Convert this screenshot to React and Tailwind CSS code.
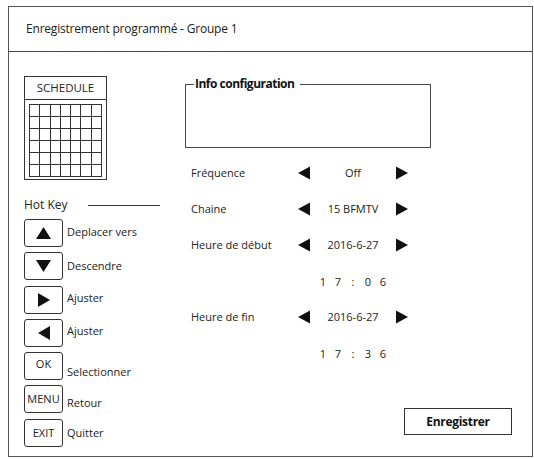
import React from "react";

const font = { fontFamily: '"Open Sans", "Noto Sans", sans-serif' };

function Tri({ dir, w = 12, h = 13 }) {
  let pts;
  if (dir === "left") pts = `${w},0 ${w},${h} 0,${h / 2}`;
  else if (dir === "right") pts = `0,0 0,${h} ${w},${h / 2}`;
  else if (dir === "up") pts = `0,${h} ${w},${h} ${w / 2},0`;
  else pts = `0,0 ${w},0 ${w / 2},${h}`;
  return (
    <svg width={w} height={h} viewBox={`0 0 ${w} ${h}`} className="block">
      <polygon points={pts} fill="#111" />
    </svg>
  );
}

function KeyRow({ children, label, labelClass = "" }) {
  return (
    <div className="flex items-center h-[28px]">
      <div className="w-[39px] h-[28px] border border-[#333] rounded-[3px] flex items-center justify-center text-[11px] text-[#222] shrink-0">
        {children}
      </div>
      <span className={`ml-[4px] text-[11px] text-[#222] ${labelClass}`}>{label}</span>
    </div>
  );
}

function SelRow({ label, value }) {
  return (
    <div className="flex items-center h-[36px]">
      <span className="w-[113px] pl-[6px] text-[11px] text-[#222]">{label}</span>
      <div className="w-[12px] flex justify-center"><Tri dir="left" w={13} h={14} /></div>
      <span className="w-[86px] text-center text-[11px] text-[#222]">{value}</span>
      <div className="w-[12px] flex justify-center"><Tri dir="right" w={13} h={14} /></div>
    </div>
  );
}

function TimeRow({ chars }) {
  return (
    <div className="flex items-center h-[36px] pt-[3px]">
      <span className="w-[125px]" />
      <div className="w-[86px] flex justify-center text-[11px] text-[#222]">
        {chars.map((c, i) => (
          <span key={i} className="w-[15px] text-center">{c}</span>
        ))}
      </div>
    </div>
  );
}

export default function App() {
  const cells = Array.from({ length: 42 });
  return (
    <div className="w-[534px] h-[459px] bg-white overflow-hidden" style={font}>
      <div className="ml-[8px] mt-[6px] w-[525px] h-[451px] border border-[#555] flex flex-col">
        <div className="h-[45px] border-b border-[#444] flex items-center pl-[17px] text-[12px] text-[#222] tracking-[-0.2px]">
          Enregistrement programmé - Groupe 1
        </div>
        <div className="flex flex-1">
          {/* left column */}
          <div className="w-[160px] pl-[15px] flex flex-col">
            <div className="mt-[24px] w-[83px] h-[104px] border border-[#333] flex flex-col">
              <div className="h-[23px] border-b border-[#333] flex items-center justify-center text-[11.5px] text-[#222]">
                SCHEDULE
              </div>
              <div className="mt-[4px] ml-[4px] w-[73px] h-[73px] bg-[#333] p-[1px] grid grid-cols-7 grid-rows-6 gap-[1px]">
                {cells.map((_, i) => (
                  <div key={i} className="bg-white" />
                ))}
              </div>
            </div>
            <div className="mt-[18px] h-[14px] flex items-center">
              <span className="text-[12px] text-[#222] w-[64px]">Hot Key</span>
              <div className="w-[72px] h-px bg-[#333]" />
            </div>
            <div className="mt-[7px] flex flex-col gap-[5.3px]">
              <KeyRow label="Deplacer vers" labelClass="-mt-[2px]"><Tri dir="up" w={15} h={12} /></KeyRow>
              <KeyRow label="Descendre"><Tri dir="down" w={15} h={12} /></KeyRow>
              <KeyRow label="Ajuster" labelClass="-mt-[3px]"><Tri dir="right" w={12} h={14} /></KeyRow>
              <KeyRow label="Ajuster" labelClass="-mt-[3px]"><Tri dir="left" w={12} h={14} /></KeyRow>
              <KeyRow label="Selectionner" labelClass="mt-[12px]"><span className="-mt-[3px]">OK</span></KeyRow>
              <KeyRow label="Retour" labelClass="mt-[8px]">MENU</KeyRow>
              <KeyRow label="Quitter">EXIT</KeyRow>
            </div>
          </div>
          {/* right column */}
          <div className="flex-1 flex flex-col pl-[16px]">
            <fieldset className="mt-[24px] w-[246px] h-[72px] border border-[#444]">
              <legend className="ml-[8px] pl-[1px] pr-[6px] text-[12px] font-bold leading-[16px] text-[#111] tracking-[-0.5px]">
                Info configuration
              </legend>
            </fieldset>
            <div className="mt-[7px] flex flex-col">
              <SelRow label="Fréquence" value="Off" />
              <SelRow label="Chaine" value="15 BFMTV" />
              <SelRow label="Heure de début" value="2016-6-27" />
              <TimeRow chars={["1", "7", ":", "0", "6"]} />
              <SelRow label="Heure de fin" value="2016-6-27" />
              <TimeRow chars={["1", "7", ":", "3", "6"]} />
            </div>
            <div className="mt-[37px] self-end mr-[20px] w-[108px] h-[27px] border border-[#333] flex items-center justify-center text-[12px] font-bold text-[#111] tracking-[-0.3px]">
              Enregistrer
            </div>
          </div>
        </div>
      </div>
    </div>
  );
}
